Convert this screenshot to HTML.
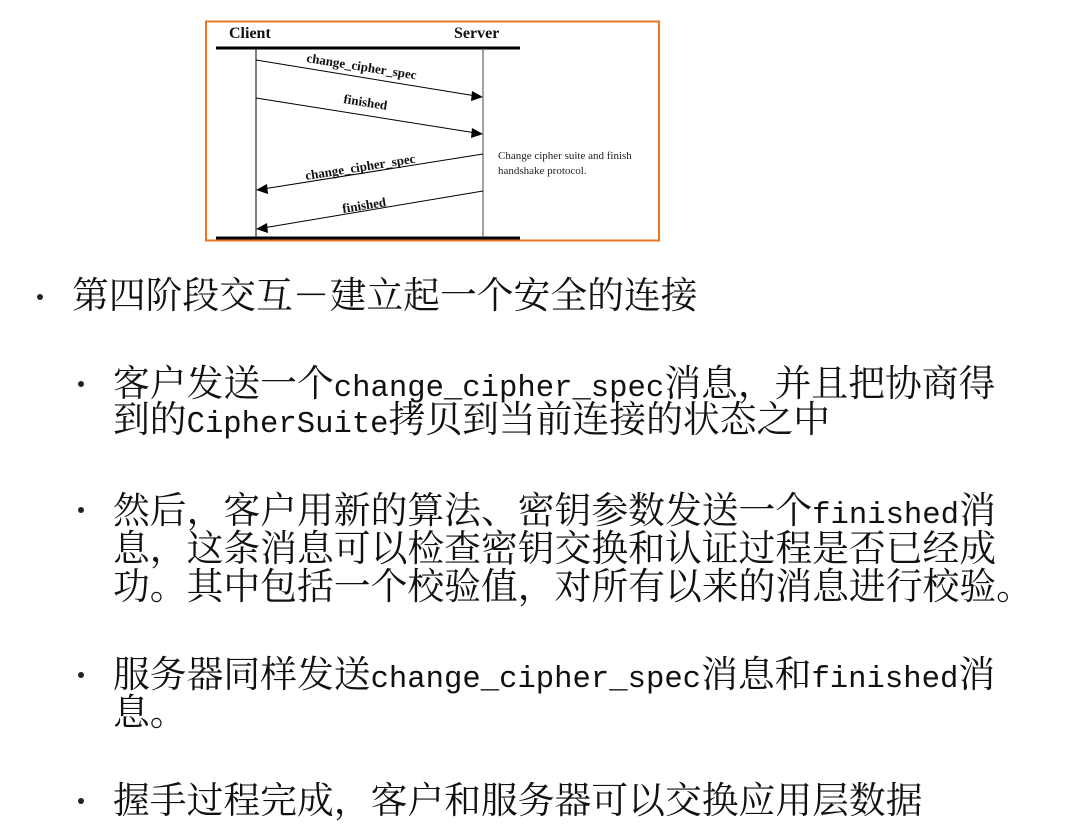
<!DOCTYPE html>
<html><head><meta charset="utf-8"><style>
html,body{margin:0;padding:0;background:#fff;}
body{width:1084px;height:831px;position:relative;overflow:hidden;font-family:"Liberation Serif","Noto Serif CJK SC",serif;color:#111;}
.t{position:absolute;white-space:nowrap;font-size:36.8px;line-height:38px;}
.l{font-family:"Liberation Mono",monospace;font-size:30.6px;}
.b{position:absolute;width:6px;height:6px;border-radius:50%;background:#222;}
</style></head><body>
<svg width="1084" height="260" style="position:absolute;left:0;top:0">
<rect x="206" y="21.5" width="453" height="219" fill="none" stroke="#e87722" stroke-width="2"/>
<line x1="216" y1="48" x2="520" y2="48" stroke="#000" stroke-width="3"/>
<line x1="216" y1="238" x2="520" y2="238" stroke="#000" stroke-width="3"/>
<line x1="256" y1="48" x2="256" y2="238" stroke="#000" stroke-width="1"/>
<line x1="483" y1="48" x2="483" y2="238" stroke="#444" stroke-width="1"/>
<g stroke="#000" stroke-width="1">
<line x1="256" y1="60" x2="476" y2="96"/>
<line x1="256" y1="98" x2="476" y2="133"/>
<line x1="483" y1="154" x2="263" y2="189"/>
<line x1="483" y1="191" x2="263" y2="228"/>
</g>
<polygon points="483,97 472,91 471,101" fill="#000"/>
<polygon points="483,134 472,128 471,138" fill="#000"/>
<polygon points="256,190 267,184 268,194" fill="#000"/>
<polygon points="256,229 267,223 268,233" fill="#000"/>
<g font-family="Liberation Serif,serif" font-weight="bold" font-size="13" fill="#111">
<text x="229" y="38" font-size="16">Client</text>
<text x="454" y="38" font-size="16">Server</text>
<text x="306" y="62" transform="rotate(9 306 62)">change_cipher_spec</text>
<text x="343" y="103" transform="rotate(9 343 103)">finished</text>
<text x="306" y="180" transform="rotate(-9 306 180)">change_cipher_spec</text>
<text x="343" y="213" transform="rotate(-9 343 213)">finished</text>
</g>
<g font-family="Liberation Serif,serif" font-size="11" fill="#222">
<text x="498" y="159">Change cipher suite and finish</text>
<text x="498" y="174">handshake protocol.</text>
</g>
</svg>
<div class="b" style="left:37px;top:294px"></div>
<div class="t" style="left:72px;top:277px">第四阶段交互－建立起一个安全的连接</div>
<div class="b" style="left:78px;top:381px"></div>
<div class="t" style="left:113px;top:365px">客户发送一个<span class="l">change_cipher_spec</span>消息，并且把协商得</div>
<div class="t" style="left:113px;top:401px">到的<span class="l">CipherSuite</span>拷贝到当前连接的状态之中</div>
<div class="b" style="left:78px;top:507px"></div>
<div class="t" style="left:113px;top:492px">然后，客户用新的算法、密钥参数发送一个<span class="l">finished</span>消</div>
<div class="t" style="left:113px;top:530px">息，这条消息可以检查密钥交换和认证过程是否已经成</div>
<div class="t" style="left:113px;top:568px">功。其中包括一个校验值，对所有以来的消息进行校验。</div>
<div class="b" style="left:78px;top:672px"></div>
<div class="t" style="left:113px;top:656px">服务器同样发送<span class="l">change_cipher_spec</span>消息和<span class="l">finished</span>消</div>
<div class="t" style="left:113px;top:694px">息。</div>
<div class="b" style="left:78px;top:798px"></div>
<div class="t" style="left:113px;top:782px">握手过程完成，客户和服务器可以交换应用层数据</div>
</body></html>
